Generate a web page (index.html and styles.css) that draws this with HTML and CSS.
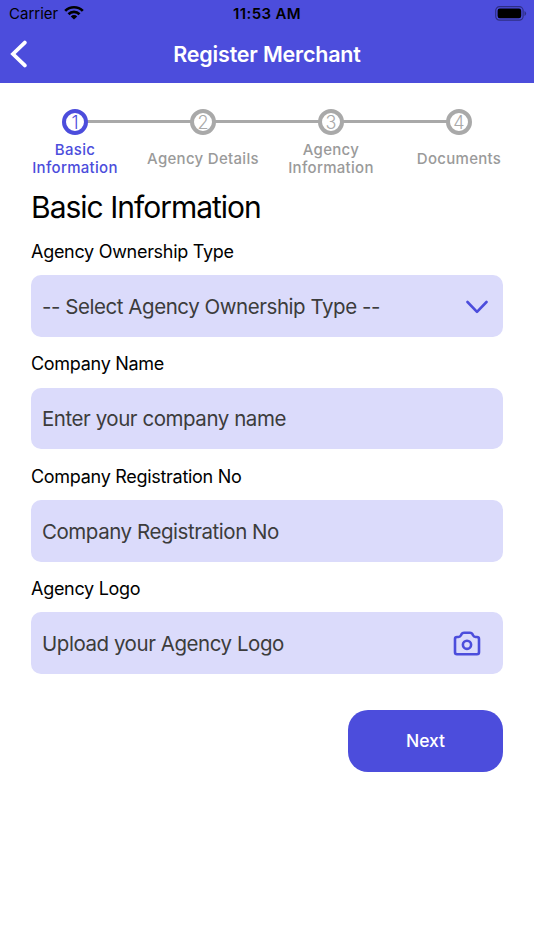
FILE: index.html
```
<!DOCTYPE html>
<html lang="en">
<head>
  <meta charset="UTF-8">
  <title>Register Merchant</title>
  <link rel="stylesheet" href="styles.css">
</head>
<body>

<header>
  <div class="status-bar">
    <div class="carrier">
      <span>Carrier</span>
      <svg class="wifi" viewBox="0 0 20 15">
        <path d="M1.2 5.9a12.4 12.4 0 0 1 17.6 0M4.5 9.2a7.8 7.8 0 0 1 11 0" fill="none" stroke="#000" stroke-width="2.7"/>
        <path d="M10 14.6l-3.2-3.2a4.6 4.6 0 0 1 6.4 0z"/>
      </svg>
    </div>
    <div class="time">11:53 AM</div>
    <svg class="battery" viewBox="0 0 32 15">
      <rect x=".7" y=".7" width="27.4" height="13.4" rx="3.8" fill="none" stroke="#000" stroke-opacity=".4" stroke-width="1.2"/>
      <rect x="2.6" y="2.6" width="23.6" height="9.6" rx="2.2"/>
      <path d="M29.5 5v5q1.6-.7 1.6-2.5T29.5 5z" fill-opacity=".4"/>
    </svg>
  </div>
  <div class="nav-bar">
    <svg class="back" viewBox="0 0 18 28">
      <path d="M15.8 2.6L4 14 15.8 25.4" fill="none" stroke="#fff" stroke-width="3.8" stroke-linecap="round"/>
    </svg>
    <h1>Register Merchant</h1>
  </div>
</header>

<!-- Steps -->
<div class="steps">
  <div class="step active">
    <div class="circle">1</div>
    <p>Basic<br>Information</p>
  </div>
  <div class="step">
    <div class="circle">2</div>
    <p>Agency Details</p>
  </div>
  <div class="step">
    <div class="circle">3</div>
    <p>Agency<br>Information</p>
  </div>
  <div class="step">
    <div class="circle">4</div>
    <p>Documents</p>
  </div>
</div>

<!-- Form -->
<main>
  <h2>Basic Information</h2>

  <label>Agency Ownership Type</label>
  <div class="field">
    <span>-- Select Agency Ownership Type --</span>
    <svg class="chevron" viewBox="0 0 22 14">
      <path d="M1.5 2L11 11.8 20.5 2" fill="none" stroke="#4c4ddc" stroke-width="2.6" stroke-linecap="round" stroke-linejoin="round"/>
    </svg>
  </div>

  <label>Company Name</label>
  <div class="field">
    <span>Enter your company name</span>
  </div>

  <label>Company Registration No</label>
  <div class="field">
    <span>Company Registration No</span>
  </div>

  <label>Agency Logo</label>
  <div class="field">
    <span>Upload your Agency Logo</span>
    <svg class="camera" viewBox="0 0 28 26" fill="none" stroke="#4c4ddc" stroke-width="2.6" stroke-linejoin="round">
      <path d="M4 6H5.4Q7.2 6 8 4.3L8.5 3.2Q9.3 1.8 11 1.8h6q1.7 0 2.5 1.4l.5 1.1Q20.8 6 22.6 6H24q2 0 2 2v13.2q0 2-2 2H4q-2 0-2-2V8q0-2 2-2z"/>
      <circle cx="14" cy="13.8" r="4.1"/>
    </svg>
  </div>

  <button>Next</button>
</main>

</body>
</html>
```
FILE: styles.css
```
* {
  box-sizing: border-box;
}
body {
  font-family: Inter, "Liberation Sans", sans-serif;
  background: #fff;
  color: #000;
  margin: 0;
}
svg {
  display: block;
}
header {
  height: 83px;
  background: #4c4ddc;
}
.status-bar {
  display: grid;
  grid-template-columns: 1fr auto 1fr;
  align-items: center;
  height: 27px;
  padding: 0 7px 0 9px;
}
.carrier {
  display: flex;
  align-items: center;
  gap: 6px;
  font-size: 15px;
}
.wifi {
  width: 20px;
  height: 15px;
  margin-top: -2px;
}
.time {
  font-size: 15px;
  font-weight: 600;
  letter-spacing: 0.35px;
  padding-right: 2px;
}
.battery {
  width: 32px;
  height: 15px;
  justify-self: end;
}
.nav-bar {
  display: grid;
  grid-template-columns: 1fr auto 1fr;
  align-items: center;
  height: 54px;
  padding: 0 9px;
}
.back {
  width: 18px;
  height: 28px;
}
h1 {
  color: #fff;
  font-size: 21.5px;
  font-weight: 600;
  letter-spacing: -0.2px;
  margin: 0;
}
.steps {
  display: grid;
  grid-template-columns: repeat(4, 1fr);
  padding: 26px 11px 0;
}
/* the line that joins the circles is drawn as the step's background */
.step {
  --line: linear-gradient(#a9a9a9, #a9a9a9) no-repeat;
  display: flex;
  flex-direction: column;
  align-items: center;
  color: #9a9a9a;
  background: var(--line) 0 11px / 52px 3px, var(--line) 100% 11px / 52px 3px;
}
.step:first-child {
  background: var(--line) 100% 11px / 52px 3px;
}
.step:last-child {
  background: var(--line) 0 11px / 52px 3px;
}
.circle {
  width: 26px;
  height: 26px;
  border: 4px solid #a9a9a9;
  border-radius: 50%;
  color: #a9a9a9;
  font-size: 18px;
  font-weight: 300;
  line-height: 20px;
  text-align: center;
}
.step p {
  display: flex;
  align-items: center;
  height: 38px;
  margin: 5px 0 0;
  font-size: 15px;
  font-weight: 500;
  line-height: 18.5px;
  letter-spacing: 0.3px;
  text-align: center;
}
.active,
.active .circle {
  color: #4c4ddc;
}
.active .circle {
  border-color: #4c4ddc;
}
main {
  display: flex;
  flex-direction: column;
  padding: 11px 31px 0;
}
h2 {
  font-size: 30px;
  font-weight: 400;
  line-height: 36px;
  letter-spacing: -1px;
  margin: 0 0 16px;
}
label {
  font-size: 18px;
  line-height: 22px;
  letter-spacing: -0.29px;
}
.field {
  display: flex;
  align-items: center;
  justify-content: space-between;
  height: 61.6px;
  margin: 12.4px 0 16.3px;
  padding: 1px 22px 0 11px;
  background: #dbdbfb;
  border-radius: 10px;
  color: #3c3c3c;
  font-size: 20.5px;
  letter-spacing: -0.45px;
}
.chevron {
  width: 22px;
  height: 14px;
  margin-right: -7px;
}
.camera {
  width: 28px;
  height: 26px;
}
button {
  align-self: flex-end;
  width: 155px;
  height: 62px;
  margin-top: 20px;
  padding-bottom: 3px;
  background: #4c4ddc;
  color: #fff;
  border: none;
  border-radius: 20px;
  font-family: inherit;
  font-size: 17.5px;
  font-weight: 500;
}
```
